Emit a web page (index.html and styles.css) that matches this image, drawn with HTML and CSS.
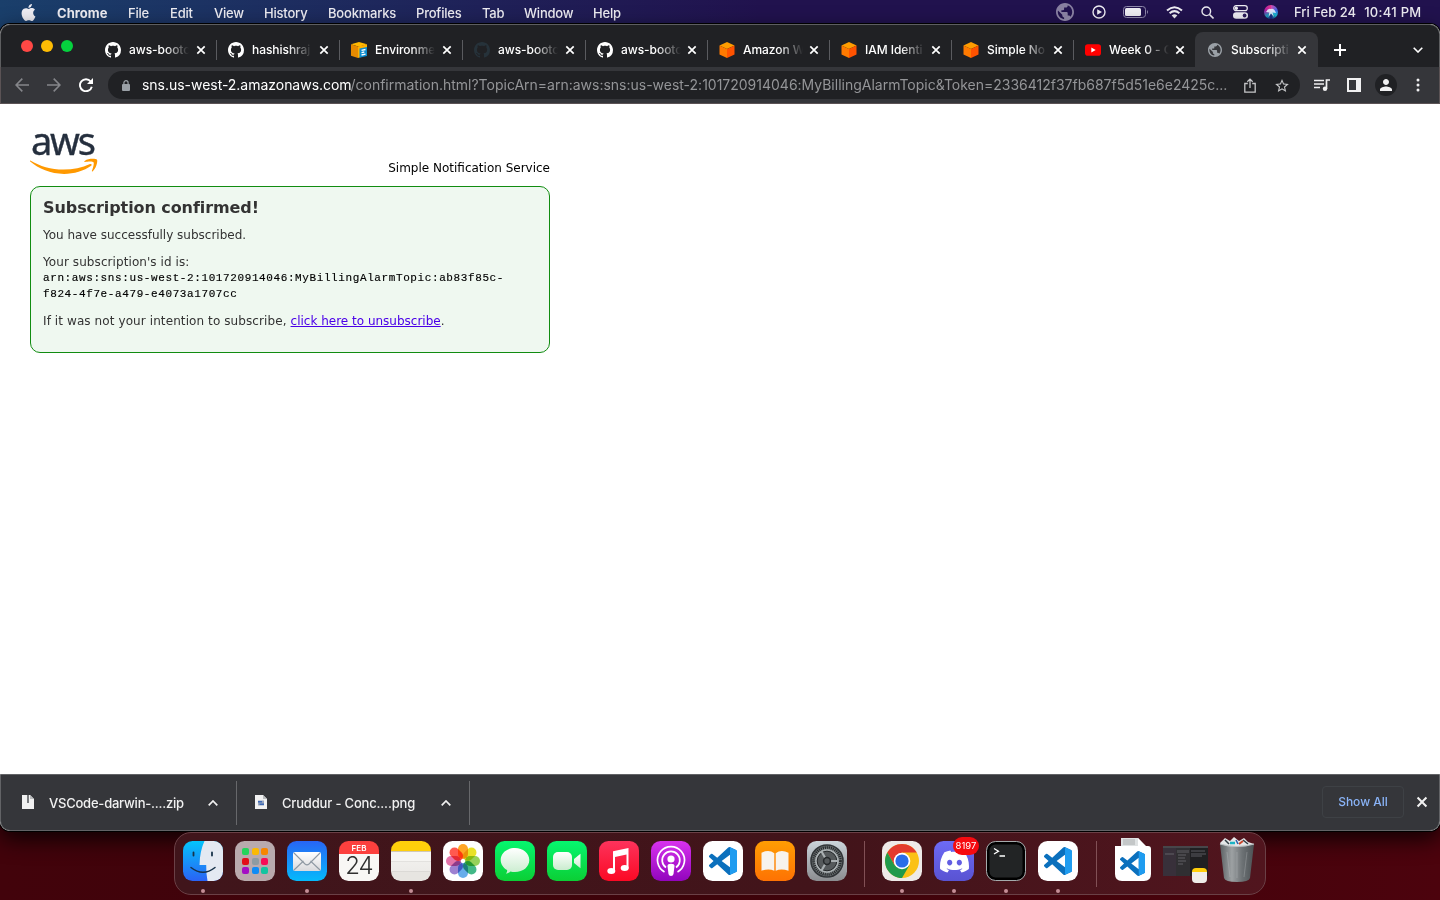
FILE: index.html
```html
<!DOCTYPE html>
<html lang="en">
<head>
<meta charset="utf-8">
<title>Subscription confirmed</title>
<link rel="stylesheet" href="styles.css">
</head>
<body>
<svg class="defs" width="0" height="0">
  <defs>
    <symbol id="x" viewBox="0 0 10 10"><path d="M1.3 1.3l7.4 7.4M8.7 1.3L1.3 8.7" stroke="currentColor" stroke-width="1.7" fill="none"/></symbol>
    <symbol id="github" viewBox="0 0 16 16"><path fill="currentColor" d="M8 0C3.58 0 0 3.58 0 8c0 3.54 2.29 6.53 5.47 7.59.4.07.55-.17.55-.38 0-.19-.01-.82-.01-1.49-2.01.37-2.53-.49-2.69-.94-.09-.23-.48-.94-.82-1.13-.28-.15-.68-.52-.01-.53.63-.01 1.08.58 1.23.82.72 1.21 1.87.87 2.33.66.07-.52.28-.87.51-1.07-1.78-.2-3.64-.89-3.64-3.95 0-.87.31-1.59.82-2.15-.08-.2-.36-1.02.08-2.12 0 0 .67-.21 2.2.82.64-.18 1.32-.27 2-.27s1.36.09 2 .27c1.53-1.04 2.2-.82 2.2-.82.44 1.1.16 1.92.08 2.12.51.56.82 1.27.82 2.15 0 3.07-1.87 3.75-3.65 3.95.29.25.54.73.54 1.48 0 1.07-.01 1.93-.01 2.2 0 .21.15.46.55.38A8.01 8.01 0 0 0 16 8c0-4.42-3.58-8-8-8z"/></symbol>
    <symbol id="cube" viewBox="0 0 16 16"><path fill="#ff9d00" d="M8 0l7.5 3.6L8 7 .5 3.600z"/><path fill="#ff7a00" d="M.5 3.600L8 7v9L.5 12.400z"/><path fill="#ff5200" d="M15.500 3.600L8 7v9l7.500-3.600z"/></symbol>
    <symbol id="globe" viewBox="2 2 20 20"><path fill="currentColor" d="M12 2C6.48 2 2 6.48 2 12s4.48 10 10 10 10-4.480 10-10S17.520 2 12 2zm-1 17.930c-3.950-.490-7-3.850-7-7.930 0-.620.080-1.210.210-1.790L9 15v1c0 1.100.900 2 2 2v1.930zm6.900-2.540c-.260-.810-1-1.390-1.900-1.390h-1v-3c0-.550-.450-1-1-1H8v-2h2c.550 0 1-.450 1-1V7h2c1.100 0 2-.900 2-2v-.410c2.930 1.190 5 4.060 5 7.410 0 2.080-.800 3.970-2.100 5.390z"/></symbol>
    <symbol id="vscode" viewBox="0 0 24 24"><path fill="#0b70bd" d="M23.150 2.587L18.210.210a1.494 1.494 0 0 0-1.705.290l-9.460 8.630-4.120-3.128a.999.999 0 0 0-1.276.057L.327 7.261A1 1 0 0 0 .326 8.740L3.899 12 .326 15.260a1 1 0 0 0 .001 1.479L1.650 17.940a.999.999 0 0 0 1.276.057l4.120-3.128 9.460 8.630a1.492 1.492 0 0 0 1.704.290l4.942-2.377A1.500 1.500 0 0 0 24 20.060V3.939a1.500 1.500 0 0 0-.850-1.352zm-5.146 14.861L10.826 12l7.178-5.448v10.896z"/><path fill="#1f9cf0" d="M18 .15l5.150 2.437A1.500 1.500 0 0 1 24 3.939V20.060a1.500 1.500 0 0 1-.850 1.352L18 23.850z"/></symbol>
    <linearGradient id="paper" x2="0" y2="1"><stop stop-color="#fff"/><stop offset="1" stop-color="#d9d9dc"/></linearGradient>
    <linearGradient id="bubble" x2="0" y2="1"><stop stop-color="#fff"/><stop offset="1" stop-color="#c9ecce"/></linearGradient>
    <linearGradient id="metal" x2="1"><stop stop-color="#5c6164"/><stop offset=".35" stop-color="#9da1a3"/><stop offset=".65" stop-color="#6d7275"/><stop offset="1" stop-color="#4c5154"/></linearGradient>
    <linearGradient id="blue" x2="0" y2="1"><stop stop-color="#04c4fb"/><stop offset="1" stop-color="#2a62f5"/></linearGradient>
  </defs>
</svg>

<header class="menubar">
  <svg class="apple" viewBox="0 0 24 24"><path fill="currentColor" d="M12.152 6.896c-.948 0-2.415-1.078-3.960-1.040-2.040.027-3.910 1.183-4.961 3.014-2.117 3.675-.546 9.103 1.519 12.090 1.013 1.454 2.208 3.090 3.792 3.039 1.520-.065 2.090-.987 3.935-.987 1.831 0 2.350.987 3.960.948 1.637-.026 2.676-1.480 3.676-2.948 1.156-1.688 1.636-3.325 1.662-3.415-.039-.013-3.182-1.221-3.220-4.857-.026-3.040 2.480-4.494 2.597-4.559-1.429-2.090-3.623-2.324-4.390-2.376-2-.156-3.675 1.090-4.610 1.090zM15.530 3.830c.843-1.012 1.400-2.427 1.245-3.830-1.207.052-2.662.805-3.532 1.818-.780.896-1.454 2.338-1.273 3.714 1.338.104 2.715-.688 3.559-1.701"/></svg>
  <nav class="menus">
    <b>Chrome</b><span>File</span><span>Edit</span><span>View</span><span>History</span><span>Bookmarks</span><span>Profiles</span><span>Tab</span><span>Window</span><span>Help</span>
  </nav>
  <div class="status">
    <svg class="dim" width="18" height="18"><use href="#globe"/></svg>
    <svg width="14" height="14" viewBox="0 0 14 14"><circle cx="7" cy="7" r="6" fill="none" stroke="currentColor" stroke-width="1.400"/><path fill="currentColor" d="M5.200 4.200L10 7 5.200 9.800z"/></svg>
    <svg width="26" height="12" viewBox="0 0 26 12"><rect x=".5" y=".5" width="22" height="11" rx="3" fill="none" stroke="#8f88ab"/><rect x="2" y="2" width="16" height="8" rx="1.500" fill="currentColor"/><path d="M24 4q2 2 0 4z" fill="#8f88ab"/></svg>
    <svg width="17" height="13" viewBox="0 0 17 13"><path d="M1 4.500Q8.500-2 16 4.500M3.600 7.200q4.900-4.200 9.800 0" fill="none" stroke="currentColor" stroke-width="2"/><path d="M5.700 9.400q2.800-2.200 5.600 0L8.500 12.500z" fill="currentColor"/></svg>
    <svg width="13" height="13" viewBox="0 0 13 13"><circle cx="5.300" cy="5.300" r="4.300" fill="none" stroke="currentColor" stroke-width="1.400"/><path d="M8.500 8.500l4 4" stroke="currentColor" stroke-width="1.600"/></svg>
    <svg width="15" height="14" viewBox="0 0 15 14"><rect x=".7" y=".7" width="13.600" height="5" rx="2.500" fill="none" stroke="currentColor" stroke-width="1.200"/><circle cx="3.300" cy="3.200" r="1.700" fill="currentColor"/><rect y="7.300" width="15" height="6.400" rx="3.200" fill="currentColor"/><circle cx="11.600" cy="10.500" r="1.900" fill="#2b1c5a"/></svg>
    <span class="siri"><svg width="14" height="14" viewBox="0 0 14 14"><path d="M2 7q2-4 5-3 3-1 5 4L8.500 7.500 10 12 7 8.500 4.500 12l.8-4.500z" fill="#e8f4ff" opacity=".9"/></svg></span>
  </div>
  <div class="clock"><span>Fri Feb 24</span><span>10:41 PM</span></div>
</header>

<main class="window">
  <div class="tabstrip">
    <div class="lights"><i class="red"></i><i class="yellow"></i><i class="green"></i></div>
    <div class="tab wide"><svg class="fav"><use href="#github"/></svg><span>aws-bootc</span><svg class="close"><use href="#x"/></svg></div>
    <div class="tab wide"><svg class="fav"><use href="#github"/></svg><span>hashishraj</span><svg class="close"><use href="#x"/></svg></div>
    <div class="tab wide"><svg class="fav" viewBox="0 0 16 16"><path fill="#ffb800" d="M0 2.300L8 0l8 2.300L8 4.800z"/><path fill="#e68a00" d="M0 2.300l7 2.300V16l-7-2.300z"/><path fill="#ffb000" d="M7 4.600l9-2.300V6L10 7v8l-3 1z"/><path fill="#0c8ccf" d="M8.500 6.500L16 5v9l-7.500 1.800z"/><path stroke="#fff" stroke-width="1.300" d="M10.500 8.300l4-.8M10.500 10.600l2.800-.6M10.500 13l4-.900"/></svg><span>Environme</span><svg class="close"><use href="#x"/></svg></div>
    <div class="tab wide"><svg class="fav faded"><use href="#github"/></svg><span>aws-bootc</span><svg class="close"><use href="#x"/></svg></div>
    <div class="tab"><svg class="fav"><use href="#github"/></svg><span>aws-bootc</span><svg class="close"><use href="#x"/></svg></div>
    <div class="tab"><svg class="fav"><use href="#cube"/></svg><span>Amazon W</span><svg class="close"><use href="#x"/></svg></div>
    <div class="tab"><svg class="fav"><use href="#cube"/></svg><span>IAM Identi</span><svg class="close"><use href="#x"/></svg></div>
    <div class="tab"><svg class="fav"><use href="#cube"/></svg><span>Simple No</span><svg class="close"><use href="#x"/></svg></div>
    <div class="tab last"><svg class="fav" viewBox="0 0 16 16"><rect y="2.300" width="16" height="11.400" rx="2.800" fill="#f00"/><path fill="#fff" d="M6.300 5.600L10.700 8l-4.400 2.400z"/></svg><span>Week 0 - C</span><svg class="close"><use href="#x"/></svg></div>
    <div class="tab active"><svg class="fav globe"><use href="#globe"/></svg><span>Subscripti</span><svg class="close"><use href="#x"/></svg></div>
    <svg class="plus" viewBox="0 0 12 12"><path d="M6 0v12M0 6h12" stroke="currentColor" stroke-width="2"/></svg>
    <svg class="more" viewBox="0 0 10 6"><path d="M.7.7L5 5 9.300.7" fill="none" stroke="currentColor" stroke-width="1.600"/></svg>
  </div>

  <div class="toolbar">
    <svg class="nav" viewBox="0 0 14 14"><path d="M14 7H1M7.300.6L1 7l6.300 6.400" fill="none" stroke="currentColor" stroke-width="1.600"/></svg>
    <svg class="nav" viewBox="0 0 14 14"><path d="M0 7h13M6.700.6L13 7l-6.300 6.400" fill="none" stroke="currentColor" stroke-width="1.600"/></svg>
    <svg class="nav on" viewBox="0 0 14 14"><path d="M11.700 3.500A6 6 0 1 0 12.800 8.700" fill="none" stroke="currentColor" stroke-width="1.900"/><path d="M14 0v6H8z" fill="currentColor"/></svg>
    <div class="omnibox">
      <svg class="lock" viewBox="0 0 8 11"><rect y="4" width="8" height="7" rx="1" fill="currentColor"/><path d="M1.900 4.500V2.800a2.100 2.100 0 0 1 4.200 0v1.700" fill="none" stroke="currentColor" stroke-width="1.200"/></svg>
      <span class="url"><span class="host">sns.us-west-2.amazonaws.com</span><span class="path">/confirmation.html?TopicArn=arn:aws:sns:us-west-2:101720914046:MyBillingAlarmTopic&amp;Token=2336412f37fb687f5d51e6e2425c...</span></span>
      <svg class="share" viewBox="0 0 12 15"><path d="M3.800 5.500H.8v8.700h10.400V5.500H8.200M6 10V1.200M3.300 3.800L6 1.100l2.700 2.700" fill="none" stroke="currentColor" stroke-width="1.300"/></svg>
      <svg class="star" viewBox="2 2 20 19"><path fill="currentColor" d="M22 9.240l-7.190-.620L12 2 9.190 8.630 2 9.240l5.460 4.730L5.820 21 12 17.270 18.180 21l-1.630-7.030L22 9.240zM12 15.400l-3.760 2.270 1-4.280-3.320-2.880 4.380-.380L12 6.100l1.710 4.040 4.380.380-3.320 2.880 1 4.280L12 15.400z"/></svg>
    </div>
    <svg class="music" viewBox="0 0 16 12"><path d="M0 1.500h10M0 5h10M0 8.500h6" stroke="currentColor" stroke-width="1.500"/><path d="M12.500 10V1H16" fill="none" stroke="currentColor" stroke-width="1.700"/><circle cx="11" cy="9.800" r="2.200" fill="currentColor"/></svg>
    <svg class="panel" viewBox="0 0 14 14"><path fill="currentColor" fill-rule="evenodd" d="M0 0h14v14H0zM2 2v10h7V2z"/></svg>
    <div class="avatar"><svg viewBox="4 4 16 16"><path fill="currentColor" d="M12 12c2.210 0 4-1.790 4-4s-1.790-4-4-4-4 1.790-4 4 1.790 4 4 4zm0 2c-2.670 0-8 1.340-8 4v2h16v-2c0-2.660-5.330-4-8-4z"/></svg></div>
    <svg class="kebab" viewBox="0 0 4 14"><g fill="currentColor"><circle cx="2" cy="2" r="1.500"/><circle cx="2" cy="7" r="1.500"/><circle cx="2" cy="12" r="1.500"/></g></svg>
  </div>

  <section class="page">
    <div class="page-head">
      <div class="aws"><span>aws</span>
        <svg viewBox="0 0 68 17"><path fill="#f90" d="M.3 2.500C10 8.200 21 11.600 33.500 11.600c9.500 0 18.500-2 26.500-5.600 1.300-.5 2.300.8 1.200 1.800C54 13 44 15.900 34 15.900 20.500 15.900 8.500 10.800.2 3.600c-.7-.7-.5-1.400.1-1.100z"/><path fill="#f90" d="M63.500 4.200c-1-1.200-6.200-.6-8.600-.3-.8.1-.9-.5-.2-1C59-.1 66.200.7 67 1.800c.8 1.100-.3 8.100-4.200 11.400-.6.5-1.200.2-.9-.5.9-2.200 2.500-7.300 1.600-8.500z"/></svg>
      </div>
      <p class="service">Simple Notification Service</p>
    </div>
    <div class="card">
      <h1>Subscription confirmed!</h1>
      <p class="line success">You have successfully subscribed.</p>
      <p class="line id-label">Your subscription's id is:</p>
      <code>arn:aws:sns:us-west-2:101720914046:MyBillingAlarmTopic:ab83f85c-<br>f824-4f7e-a479-e4073a1707cc</code>
      <p class="line unsub"><span>If it was not your intention to subscribe, </span><a href="#">click here to unsubscribe</a>.</p>
    </div>
  </section>

  <footer class="downloads">
    <div class="download"><svg class="file" viewBox="0 0 12 14"><path fill="#f1f1f1" d="M0 0h8l4 4v10H0z"/><path fill="#b9bbbd" d="M8 0v4h4z"/><path fill="#77797c" d="M5 0h2v8H5z"/></svg><span class="zip">VSCode-darwin-....zip</span><svg class="up" viewBox="0 0 10 6"><path d="M.7 5.300L5 1l4.300 4.300" fill="none" stroke="currentColor" stroke-width="1.700"/></svg></div>
    <div class="download"><svg class="file" viewBox="0 0 12 14"><path fill="#f1f1f1" d="M0 0h8l4 4v10H0z"/><path fill="#b9bbbd" d="M8 0v4h4z"/><path fill="#98a6bd" d="M3 5.500h6v5H3z"/><path fill="#3c68b5" d="M3 6h4v1.500H3zM4.500 8.500H9V10H4.500z"/></svg><span class="png">Cruddur - Conc....png</span><svg class="up" viewBox="0 0 10 6"><path d="M.7 5.300L5 1l4.300 4.300" fill="none" stroke="currentColor" stroke-width="1.700"/></svg></div>
    <div class="showall">Show All</div>
    <svg class="dismiss"><use href="#x"/></svg>
  </footer>
</main>

<div class="dock">
  <div class="app run finder"><svg viewBox="0 0 40 40"><rect width="40" height="40" fill="url(#blue)"/><path fill="#e4e9f2" d="M21.500 0H40v40H24.500q-1.500-8-1.300-16H16.500Q16.800 10 21.500 0z"/><path d="M10.500 11.500v3M29 11.500v3" stroke="#17324a" stroke-width="1.800" stroke-linecap="round"/><path d="M8 26.500q12 9.500 24 0" fill="none" stroke="#17324a" stroke-width="1.500" stroke-linecap="round"/></svg></div>
  <div class="app launchpad"><i></i><i></i><i></i><i></i><i></i><i></i><i></i><i></i><i></i></div>
  <div class="app run mail"><svg viewBox="0 0 40 40"><rect x="6" y="11" width="28" height="19" rx="2" fill="url(#paper)"/><path d="M7 29l9.500-9M33 29l-9.500-9M7 12l11 11q2 1.800 4 0l11-11" fill="none" stroke="#8f99a3" stroke-width="1.100"/></svg></div>
  <div class="app calendar"><span class="month">FEB</span><span class="day">24</span></div>
  <div class="app run notes"></div>
  <div class="app photos"><svg viewBox="-20 -20 40 40"><g class="petals"><rect x="-5" y="-17" width="10" height="15" rx="5" fill="#ff9500"/><rect x="-5" y="-17" width="10" height="15" rx="5" fill="#e5dc00" transform="rotate(45)"/><rect x="-5" y="-17" width="10" height="15" rx="5" fill="#84c93b" transform="rotate(90)"/><rect x="-5" y="-17" width="10" height="15" rx="5" fill="#20ac72" transform="rotate(135)"/><rect x="-5" y="-17" width="10" height="15" rx="5" fill="#4c9fe8" transform="rotate(180)"/><rect x="-5" y="-17" width="10" height="15" rx="5" fill="#8c6bc9" transform="rotate(225)"/><rect x="-5" y="-17" width="10" height="15" rx="5" fill="#df5b9a" transform="rotate(270)"/><rect x="-5" y="-17" width="10" height="15" rx="5" fill="#ff3b30" transform="rotate(315)"/></g></svg></div>
  <div class="app lime"><svg viewBox="0 0 40 40"><path fill="url(#bubble)" d="M20 7c8 0 14.300 5 14.300 12S28 31 20 31c-1.600 0-3.200-.2-4.600-.6-1.200 1.300-2.800 2.100-4.600 2.200 1-.9 1.500-2.200 1.300-3.500C8.300 26.900 5.700 23.400 5.700 19 5.700 12 12 7 20 7z"/></svg></div>
  <div class="app lime"><svg viewBox="0 0 40 40"><rect x="6" y="11" width="19" height="18" rx="5" fill="url(#bubble)"/><path d="M27 18l6.500-5.300v14.600L27 22z" fill="url(#bubble)"/></svg></div>
  <div class="app music-app"><svg viewBox="0 0 40 40"><path fill="#fff" d="M14 10.200L29.500 7v20.500h-2V13.500L16 16v14h-2z"/><ellipse cx="12.300" cy="30" rx="4" ry="3" fill="#fff"/><ellipse cx="25.700" cy="27" rx="4" ry="3" fill="#fff"/></svg></div>
  <div class="app podcasts"><svg viewBox="0 0 40 40"><g fill="none" stroke="#fff" stroke-width="1.700"><path d="M13.500 31A13.500 13.500 0 1 1 26.500 31"/><path d="M15 26.500A8.800 8.800 0 1 1 25 26.500"/></g><circle cx="20" cy="18" r="3.600" fill="#fff"/><path fill="#fff" d="M16.500 25q0-2.300 3.500-2.300t3.500 2.300l-1 8q-.4 2-2.500 2t-2.500-2z"/></svg></div>
  <div class="app white"><svg class="code"><use href="#vscode"/></svg></div>
  <div class="app books"><svg viewBox="0 0 40 40"><path fill="#f7f3ee" d="M6.500 11.800q7.500-3.700 12.800.5v17.500q-5.500-2.800-12.800 0zM33.500 11.800q-7.500-3.700-12.800.5v17.500q5.500-2.800 12.800 0z"/></svg></div>
  <div class="app settings"><svg viewBox="0 0 40 40"><circle cx="20" cy="20" r="16" fill="#696f71" stroke="#313538" stroke-width="1.600"/><circle cx="20" cy="20" r="13.300" fill="#8b9193" stroke="#292c2e" stroke-width="3" stroke-dasharray="1.200 .8"/><circle cx="20" cy="20" r="10.800" fill="none" stroke="#aab0b2" stroke-width="1.800"/><circle cx="20" cy="20" r="9.800" fill="#55595b" stroke="#25282a"/><path d="M20 20L14.500 10.500M20 20h11M20 20l-5.500 9.500" stroke="#a8aeb0" stroke-width="2.200"/><circle cx="20" cy="20" r="3.400" fill="#55595b" stroke="#25282a" stroke-width="1.500"/></svg></div>
  <hr>
  <div class="app run chrome"><svg viewBox="0 0 40 40"><circle cx="20" cy="20" r="17" fill="#fbc116"/><path fill="#e33b2e" d="M5.300 11.500A17 17 0 0 1 34.700 11.500H20L12.600 24.300z"/><path fill="#219a4c" d="M5.300 11.500A17 17 0 0 0 20 37L27.400 24.300 20 28 12.600 24.300z"/><circle cx="20" cy="20" r="8.300" fill="#fff"/><circle cx="20" cy="20" r="6.600" fill="#2a6de8"/></svg></div>
  <div class="app run discord"><svg viewBox="0 0 24 24"><path fill="#fff" d="M20.317 4.370a19.800 19.800 0 0 0-4.885-1.515.074.074 0 0 0-.079.037c-.211.375-.445.865-.608 1.250-1.845-.276-3.680-.276-5.487 0-.164-.393-.406-.874-.618-1.250a.077.077 0 0 0-.079-.037 19.740 19.740 0 0 0-4.885 1.515.070.070 0 0 0-.032.028C.533 9.046-.319 13.580.099 18.058a.082.082 0 0 0 .031.056c2.053 1.508 4.041 2.423 5.993 3.029a.078.078 0 0 0 .084-.028c.462-.630.873-1.295 1.226-1.994a.076.076 0 0 0-.042-.106c-.653-.248-1.274-.550-1.872-.892a.077.077 0 0 1-.008-.128c.126-.094.252-.192.372-.291a.074.074 0 0 1 .078-.011c3.928 1.793 8.180 1.793 12.061 0a.074.074 0 0 1 .079.010c.120.099.246.198.373.292a.077.077 0 0 1-.007.128 12.300 12.300 0 0 1-1.873.891.077.077 0 0 0-.041.107c.360.698.772 1.363 1.225 1.993a.076.076 0 0 0 .084.029c1.961-.607 3.950-1.522 6.002-3.029a.077.077 0 0 0 .031-.055c.500-5.177-.838-9.674-3.549-13.660a.061.061 0 0 0-.031-.029zM8.020 15.331c-1.183 0-2.157-1.086-2.157-2.419 0-1.333.956-2.419 2.157-2.419 1.211 0 2.176 1.095 2.157 2.419 0 1.333-.956 2.419-2.157 2.419zm7.975 0c-1.183 0-2.157-1.086-2.157-2.419 0-1.333.955-2.419 2.157-2.419 1.211 0 2.176 1.095 2.157 2.419 0 1.333-.946 2.419-2.157 2.419z"/></svg><span class="badge">8197</span></div>
  <div class="app run terminal"><svg viewBox="0 0 40 40"><path d="M8 7.500l4.500 2.700L8 13M13.500 15H19" fill="none" stroke="#fff" stroke-width="1.300"/></svg></div>
  <div class="app run white"><svg class="code"><use href="#vscode"/></svg></div>
  <hr>
  <div class="doc"><svg viewBox="0 0 36 43"><path fill="#dfe2e3" d="M6 0h17l8 9v10H6z"/><path d="M8 2h12M8 4h12M8 6h12" stroke="#a9acad" stroke-width="1"/><path fill="#fff" d="M23 0l8 8h2q3 0 3 3v25q0 7-7 7H7q-7 0-7-7V8h23z"/></svg><svg class="code"><use href="#vscode"/></svg></div>
  <div class="thumb"><svg viewBox="0 0 45 30"><rect width="45" height="30" fill="#202022"/><path fill="#38303a" d="M0 0h13v30H0z"/><path fill="#302f32" d="M13 0h14v30H13z"/><path fill="#47464a" d="M0 0h45v2H0zM14 4h12v3H14z"/><path d="M2 8h9M15 9h8M15 12h7M15 15h8M15 18h5M28 5h14M28 8h15M28 10h11" stroke="#77757b" stroke-width=".7"/></svg><div class="mini-notes"></div></div>
  <div class="trash"><svg viewBox="0 0 36 45"><path fill="#e5e7e8" d="M1 6l5-5 5 3 4-4 5 4 5-3 4 4 6 2-3 6H4z"/><path d="M6 3l4 4M24 3l5 4" stroke="#303e45" stroke-width="1.500"/><path d="M11 6h5" stroke="#1bb3c4" stroke-width="2.500"/><path d="M20 7l4-3" stroke="#c9472e" stroke-width="2"/><path d="M17 3l2 4" stroke="#2c62b0" stroke-width="1.500"/><path fill="url(#metal)" d="M1 7q17 5 34 0l-4 34q-1 4-13 4T5 41z"/><path d="M1 7q17 5 34 0" fill="none" stroke="#bec2c4" stroke-width="1.200"/><path d="M8 15l3 25M18 15v26M28 15l-3 25" stroke="#c3c7c9" stroke-width="1" opacity=".3"/></svg></div>
</div>
</body>
</html>
```

FILE: styles.css
```css
* { box-sizing: border-box; }
body {
  margin: 0;
  width: 1440px;
  height: 900px;
  overflow: hidden;
  display: flex;
  flex-direction: column;
  font-family: Inter, "Liberation Sans", sans-serif;
  background: linear-gradient(90deg, #1a3f6b 0, #1f2158 480px, #21124e 760px, #21124e) top / 100% 60px no-repeat, linear-gradient(90deg, #42030b, #3d030a 50%, #4c030d);
}
svg { display: block; flex: none; }
.defs { position: absolute; }

/* Menu bar */
.menubar { height: 24px; flex: none; display: flex; align-items: center; color: #eeedf3; font-size: 13px; font-weight: 500; padding-left: 20px; }
.apple { width: 17px; height: 17px; margin-right: 20px; }
.menus { display: grid; grid-template-columns: 71px 42px 44px 50px 64px 88px 66px 42px 69px 60px; white-space: nowrap; padding-top: 1px; }
.menus b { font-weight: 700; letter-spacing: .05px; }
.menus span { letter-spacing: -.2px; }
.status { display: grid; grid-template-columns: 36px 31px 43px 35px 32px 31px 30px; align-items: center; margin-left: 403px; }
.dim { opacity: .5; }
.siri { width: 14px; height: 14px; border-radius: 50%; background: conic-gradient(#d94bb0, #3f66e7 20%, #17becf 35%, #1a1a75 50%, #17a0bf 62%, #af1ba4 80%, #e23b90); }
.clock { display: flex; gap: 8px; white-space: nowrap; letter-spacing: .02px; padding-bottom: 1px; }
.clock span:last-child { letter-spacing: .3px; }

/* Browser window */
.window { height: 807px; flex: none; display: flex; flex-direction: column; background: #fff; border-radius: 10px; overflow: hidden; box-shadow: 0 0 0 1px #000, 0 8px 22px #000c; }
.tabstrip { height: 43px; flex: none; background: #202124; border: 1px solid #5d5e60; border-bottom: 0; border-radius: 10px 10px 0 0; display: flex; align-items: center; padding-top: 7px; color: #fff; }
.lights { display: flex; gap: 8px; width: 93px; padding: 0 0 7px 20px; flex: none; }
.lights i { width: 12px; height: 12px; border-radius: 50%; }
.red { background: #ff4845; }
.yellow { background: #febc04; }
.green { background: #05d13e; }
.tab { width: 122px; height: 35px; flex: none; display: flex; align-items: center; padding-left: 11px; position: relative; font-size: 12px; font-weight: 500; }
.tab.wide { width: 123px; }
.tab.last { width: 121px; }
.tab::after { content: ""; position: absolute; right: 0; top: 8px; width: 1px; height: 20px; background: #5a5b5f; }
.tab.last::after, .tab.active::after { display: none; }
.fav { width: 16px; height: 16px; margin-right: 8px; }
.faded { color: #26323a; }
.tab .globe { width: 14px; height: 14px; margin: 0 9px 0 2px; color: #9aa0a6; }
.tab span { width: 60px; white-space: nowrap; letter-spacing: -.05px; mask-image: linear-gradient(90deg, #000 36px, transparent); }
.close { width: 10px; height: 10px; margin-left: 6px; }
.wide .close { margin-left: 7px; }
.tab.active { background: #35363a; border-radius: 8px 8px 0 0; width: 123px; }
.plus { width: 12px; height: 12px; margin-left: 16px; }
.more { width: 10px; height: 6px; margin-left: 67px; }

.toolbar { height: 37px; flex: none; background: #35363a; display: flex; align-items: center; color: #f0f0f1; border: 1px solid #5b5355; border-top: 0; padding-left: 14px; }
.nav { width: 14px; height: 14px; margin-right: 18px; color: #85868a; }
.nav.on { color: #fff; width: 14px; margin-right: 15px; }
.omnibox { width: 1192px; height: 28px; border-radius: 14px; background: #202124; display: flex; align-items: center; padding-left: 14px; }
.lock { width: 8px; height: 11px; color: #9aa0a6; margin-right: 12px; }
.url { width: 1102px; font-size: 14px; white-space: nowrap; color: #949598; display: flex; padding-bottom: 1px; }
.host { color: #fff; width: 208.500px; letter-spacing: -.03px; }
.path { letter-spacing: -.006px; }
.share { width: 12px; height: 15px; margin-right: 19px; color: #c5c6c8; }
.star { width: 14px; height: 13px; color: #c5c6c8; }
.music { width: 16px; height: 12px; margin-left: 14px; }
.panel { width: 14px; height: 14px; margin-left: 17px; }
.avatar { width: 22px; height: 22px; border-radius: 50%; background: #202124; margin-left: 14px; display: grid; place-items: center; }
.avatar svg { width: 12px; height: 12px; }
.kebab { width: 4px; height: 14px; margin-left: 19px; }

/* Confirmation page */
.page { flex: 1; background: #fff; padding: 24px 0 0 30px; font-family: "DejaVu Sans", Verdana, sans-serif; font-size: 12px; }
.page-head { width: 520px; height: 58px; display: flex; justify-content: space-between; align-items: flex-end; }
.aws { width: 68px; height: 58px; display: flex; flex-direction: column; justify-content: space-between; padding-bottom: 11px; }
.aws span { font: 400 38px/24px "Noto Sans", sans-serif; color: #252f3e; letter-spacing: -2.200px; padding-left: 1px; -webkit-text-stroke: .4px #252f3e; }
.aws svg { width: 68px; height: 17px; }
.service { margin: 0 0 10px; color: #000; line-height: 16px; }
.card { width: 520px; height: 167px; background: #eff8f0; border: 1px solid #118c11; border-radius: 10px; padding: 10px 12px; color: #333; }
h1 { margin: 0; font-size: 16px; line-height: 21px; letter-spacing: -.08px; }
.line { margin: 0; line-height: 16px; }
.success { padding-top: 9px; }
.id-label { padding-top: 11px; letter-spacing: .08px; }
.unsub { padding-top: 11px; }
.unsub span { letter-spacing: .095px; }
code { display: block; font: 11px/16px "Liberation Mono", monospace; letter-spacing: .602px; color: #000; -webkit-text-stroke: .15px #000; }
a { color: #4b00e8; }

/* Downloads shelf */
.downloads { height: 57px; flex: none; background: #35363a; border: 1px solid #626366; border-radius: 0 0 10px 10px; display: flex; align-items: center; color: #f1f1f1; font-size: 13px; font-weight: 500; }
.download { width: 236px; height: 44px; border-right: 1px solid #67686b; display: flex; align-items: center; padding-left: 21px; }
.download + .download { width: 233px; padding-left: 18px; }
.file { width: 12px; height: 14px; margin-bottom: 2px; }
.zip, .png { width: 144px; margin-left: 15px; margin-right: 15px; white-space: nowrap; letter-spacing: -.22px; }
.png { letter-spacing: -.17px; }
.up { width: 10px; height: 6px; }
.showall { width: 82px; height: 32px; margin: 0 12px 2px auto; border: 1px solid #3e4145; border-radius: 4px; display: grid; place-items: center; color: #8ab4f8; font-size: 12px; }
.dismiss { width: 12px; height: 12px; margin: 0 11px 2px 0; }

/* Dock */
.dock { width: 1092px; height: 63px; flex: none; margin: 1px 0 0 174px; border: 1px solid #6a4046; border-radius: 17px; background: linear-gradient(90deg, #40151b, #42141a 60%, #51151e); display: flex; align-items: flex-start; gap: 12px; padding: 8px 8px 0; position: relative; }
.dock hr { width: 1px; height: 46px; border: 0; margin: 0 5px 0 5px; background: #815055; flex: none; }
.app { width: 40px; height: 40px; flex: none; border-radius: 9.500px; position: relative; }
.app > svg { width: 40px; height: 40px; border-radius: 9.500px; }
.run::after { content: ""; position: absolute; left: 18px; top: 48px; width: 4px; height: 4px; border-radius: 50%; background: #c58e97; }
.launchpad { background: #b9aaad; display: grid; grid-template-columns: repeat(3, 7px); gap: 2.500px; place-content: center; }
.launchpad i { height: 7px; border-radius: 2px; background: #23d45b; }
.launchpad i:nth-child(2) { background: #fbb904; }
.launchpad i:nth-child(3) { background: #f78500; }
.launchpad i:nth-child(4) { background: #e20d19; }
.launchpad i:nth-child(5) { background: #8e9ba2; }
.launchpad i:nth-child(6) { background: #f90b56; }
.launchpad i:nth-child(7) { background: #a40fc4; }
.launchpad i:nth-child(8) { background: #108bf5; }
.launchpad i:nth-child(9) { background: #13c4a0; }
.mail { background: linear-gradient(#2865f5, #05bafb); }
.calendar { background: linear-gradient(#fc403e 13px, #f8f7f5 13px); display: flex; flex-direction: column; align-items: center; }
.month { color: #fff; font-size: 8px; font-weight: 600; line-height: 14px; }
.day { color: #303030; font-size: 24px; font-weight: 300; line-height: 22px; letter-spacing: -1px; }
.notes { background: linear-gradient(#ffcf0b 10px, #a99a78 10px, #f6f5f2 11px, #f6f5f2 20px, #d6d4d1 20px, #f0efec 21px, #edebe8 30px, #d0cecb 30px, #e7e5e1 31px); }
.photos, .white { background: #fff; }
.petals rect { mix-blend-mode: multiply; opacity: .85; }
.lime { background: linear-gradient(#06f66f, #0bcf35); }
.music-app { background: linear-gradient(#fd335c, #fb0924); }
.podcasts { background: linear-gradient(#d832ee, #9205bd); }
.white .code { width: 28px; height: 28px; border-radius: 0; }
.white { display: grid; place-items: center; }
.books { background: linear-gradient(#ff9d03, #fe7203); }
.settings { background: linear-gradient(#cbd4da, #8b8d90); }
.chrome { background: #eeeae8; }
.discord { background: linear-gradient(#6d6af5, #5953d2); display: grid; place-items: center; }
.discord svg { width: 29px; height: 29px; border-radius: 0; }
.badge { position: absolute; left: 19px; top: -4px; width: 26px; height: 18px; border-radius: 9px; background: #f60b10; color: #fff; font-size: 9.500px; line-height: 18px; text-align: center; }
.terminal { background: #222425; border: 1.500px solid #a5abac; box-shadow: inset 0 0 0 2.500px #000; }
.terminal svg { margin: -1.500px; }
.terminal::after { left: 17px; top: 47px; }
.doc { width: 36px; height: 43px; flex: none; margin: -3px 0 0 1px; position: relative; }
.doc > svg:first-child { width: 36px; height: 43px; }
.doc .code { position: absolute; left: 5px; top: 13px; width: 25px; height: 25px; }
.thumb { width: 45px; height: 30px; flex: none; margin: 5px 0 0; position: relative; }
.mini-notes { position: absolute; right: 1px; bottom: -7px; width: 15px; height: 15px; border-radius: 4px; background: linear-gradient(#ffcf0b 4px, #efede9 4px); }
.trash { width: 36px; height: 45px; flex: none; margin: -4px 0 0 -1px; }
.dock hr:last-of-type { margin-left: 6px; }
```
